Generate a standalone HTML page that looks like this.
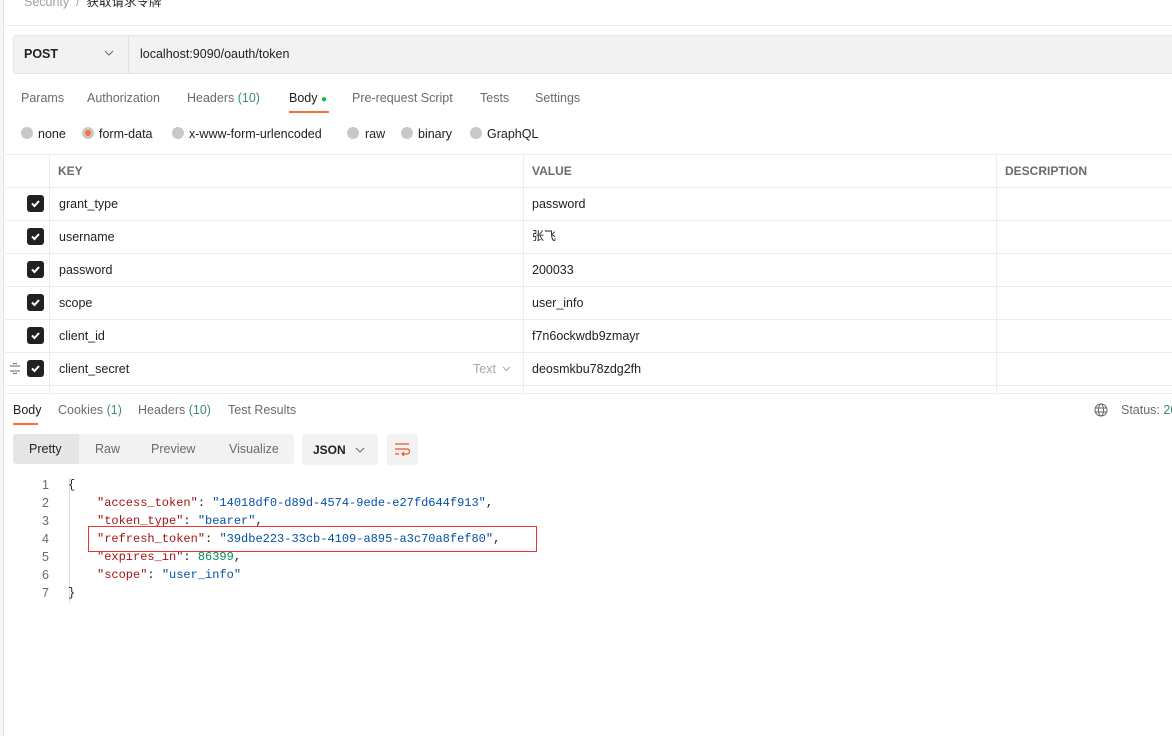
<!DOCTYPE html>
<html><head><meta charset="utf-8"><style>
*{margin:0;padding:0;box-sizing:border-box}
body{width:1172px;height:736px;overflow:hidden;background:#fff;font-family:"Liberation Sans","Noto Sans CJK SC",sans-serif;font-size:12.5px;line-height:15px;color:#212121;position:relative}
.a{position:absolute;white-space:nowrap}
.g{color:#6b6b6b}
.hl{position:absolute;height:1px;background:#ededed}
.vl{position:absolute;width:1px;background:#ededed}
.cb{position:absolute;left:27px;width:17px;height:17px;background:#212121;border-radius:3px}
.cb svg{position:absolute;left:2px;top:2px}
.rd{position:absolute;top:127px;width:12px;height:12px;border-radius:50%;background:#c8c8c8}
.code{font-family:"Liberation Mono",monospace;font-size:12px}
.k{color:#a31515}.s{color:#0451a5}.n{color:#098658}
.gr{color:#3a8f6a}
</style></head><body>
<div class="a" style="left:0;top:0;width:4px;height:736px;background:#f7f7f7;border-right:1px solid #e6e6e6"></div>
<div class="a g" style="left:24px;top:-5px;color:#a0a0a0">Security &nbsp;/ &nbsp;<span style="color:#212121">获取请求令牌</span></div>
<div class="hl" style="left:5px;top:25px;width:1167px"></div>
<div class="a" style="left:13px;top:35px;width:1165px;height:39px;background:#f2f2f2;border:1px solid #e6e6e6;border-radius:3px"></div>
<div class="vl" style="left:128px;top:35px;height:39px;background:#e0e0e0"></div>
<div class="a" style="left:24px;top:47px;font-weight:bold">POST</div>
<svg class="a" style="left:104px;top:50px" width="10" height="6"><path d="M1 1l4 4 4-4" stroke="#666" fill="none"/></svg>
<div class="a" style="left:140px;top:47px">localhost:9090/oauth/token</div>
<div class="a g" style="left:21px;top:91px">Params</div>
<div class="a g" style="left:87px;top:91px">Authorization</div>
<div class="a g" style="left:187px;top:91px">Headers <span class="gr">(10)</span></div>
<div class="a" style="left:289px;top:91px">Body <span style="color:#0cbb52;font-size:10px">●</span></div>
<div class="a" style="left:289px;top:111px;width:40px;height:2px;background:#ff6c37"></div>
<div class="a g" style="left:352px;top:91px">Pre-request Script</div>
<div class="a g" style="left:480px;top:91px">Tests</div>
<div class="a g" style="left:535px;top:91px">Settings</div>
<div class="rd" style="left:21px"></div><div class="a" style="left:38px;top:127px">none</div>
<div class="rd" style="left:82px"></div><div class="a" style="left:85px;top:130px;width:6px;height:6px;border-radius:50%;background:#ff6c37"></div><div class="a" style="left:99px;top:127px">form-data</div>
<div class="rd" style="left:172px"></div><div class="a" style="left:189px;top:127px">x-www-form-urlencoded</div>
<div class="rd" style="left:347px"></div><div class="a" style="left:365px;top:127px">raw</div>
<div class="rd" style="left:401px"></div><div class="a" style="left:418px;top:127px">binary</div>
<div class="rd" style="left:470px"></div><div class="a" style="left:487px;top:127px">GraphQL</div>
<div class="hl" style="left:5px;top:154px;width:1167px"></div>
<div class="hl" style="left:5px;top:187px;width:1167px"></div>
<div class="hl" style="left:5px;top:220px;width:1167px"></div>
<div class="hl" style="left:5px;top:253px;width:1167px"></div>
<div class="hl" style="left:5px;top:286px;width:1167px"></div>
<div class="hl" style="left:5px;top:319px;width:1167px"></div>
<div class="hl" style="left:5px;top:352px;width:1167px"></div>
<div class="hl" style="left:5px;top:385px;width:1167px"></div>
<div class="hl" style="left:5px;top:393px;width:1167px"></div>
<div class="vl" style="left:49px;top:154px;height:239px"></div>
<div class="vl" style="left:523px;top:154px;height:239px"></div>
<div class="vl" style="left:996px;top:154px;height:239px"></div>
<div class="a g" style="left:58px;top:164px;font-weight:bold;font-size:12px">KEY</div>
<div class="a g" style="left:532px;top:164px;font-weight:bold;font-size:12px">VALUE</div>
<div class="a g" style="left:1005px;top:164px;font-weight:bold;font-size:12px">DESCRIPTION</div>
<div class="cb" style="top:195px"><svg width="13" height="13"><path d="M3 6.5l2.5 2.5 4.5-5" stroke="#fff" stroke-width="2" fill="none"/></svg></div>
<div class="cb" style="top:228px"><svg width="13" height="13"><path d="M3 6.5l2.5 2.5 4.5-5" stroke="#fff" stroke-width="2" fill="none"/></svg></div>
<div class="cb" style="top:261px"><svg width="13" height="13"><path d="M3 6.5l2.5 2.5 4.5-5" stroke="#fff" stroke-width="2" fill="none"/></svg></div>
<div class="cb" style="top:294px"><svg width="13" height="13"><path d="M3 6.5l2.5 2.5 4.5-5" stroke="#fff" stroke-width="2" fill="none"/></svg></div>
<div class="cb" style="top:327px"><svg width="13" height="13"><path d="M3 6.5l2.5 2.5 4.5-5" stroke="#fff" stroke-width="2" fill="none"/></svg></div>
<div class="cb" style="top:360px"><svg width="13" height="13"><path d="M3 6.5l2.5 2.5 4.5-5" stroke="#fff" stroke-width="2" fill="none"/></svg></div>
<svg class="a" style="left:9px;top:363px" width="12" height="11"><path d="M1 3h10M1 8h10M4 1l2-1 2 1M4 10l2 1 2-1" stroke="#666" fill="none"/></svg>
<div class="a" style="left:59px;top:197px">grant_type</div><div class="a" style="left:532px;top:197px">password</div>
<div class="a" style="left:59px;top:230px">username</div><div class="a" style="left:532px;top:229px;font-size:12px">张飞</div>
<div class="a" style="left:59px;top:263px">password</div><div class="a" style="left:532px;top:263px">200033</div>
<div class="a" style="left:59px;top:296px">scope</div><div class="a" style="left:532px;top:296px">user_info</div>
<div class="a" style="left:59px;top:329px">client_id</div><div class="a" style="left:532px;top:329px">f7n6ockwdb9zmayr</div>
<div class="a" style="left:59px;top:362px">client_secret</div><div class="a" style="left:473px;top:362px;color:#a6a6a6">Text</div>
<svg class="a" style="left:502px;top:366px" width="9" height="6"><path d="M1 1l3.5 3.5L8 1" stroke="#a6a6a6" fill="none"/></svg>
<div class="a" style="left:532px;top:362px">deosmkbu78zdg2fh</div>
<div class="a" style="left:13px;top:403px">Body</div>
<div class="a" style="left:13px;top:423px;width:25px;height:2px;background:#ff6c37"></div>
<div class="a g" style="left:58px;top:403px">Cookies <span class="gr">(1)</span></div>
<div class="a g" style="left:138px;top:403px">Headers <span class="gr">(10)</span></div>
<div class="a g" style="left:228px;top:403px">Test Results</div>
<svg class="a" style="left:1094px;top:403px" width="14" height="14"><circle cx="7" cy="7" r="6" stroke="#666" fill="none"/><ellipse cx="7" cy="7" rx="2.5" ry="6" stroke="#666" fill="none"/><path d="M1 5h12M1 9h12" stroke="#666"/></svg>
<div class="a g" style="left:1121px;top:403px">Status: <span class="gr">20</span></div>
<div class="a" style="left:13px;top:434px;width:281px;height:30px;background:#f2f2f2;border-radius:3px"></div>
<div class="a" style="left:13px;top:434px;width:66px;height:30px;background:#e6e6e6;border-radius:3px 0 0 3px"></div>
<div class="a" style="left:29px;top:442px">Pretty</div>
<div class="a g" style="left:95px;top:442px">Raw</div>
<div class="a g" style="left:151px;top:442px">Preview</div>
<div class="a g" style="left:229px;top:442px">Visualize</div>
<div class="a" style="left:302px;top:434px;width:76px;height:31px;background:#f2f2f2;border-radius:3px"></div>
<div class="a" style="left:313px;top:443px;font-weight:bold;font-size:12px">JSON</div>
<svg class="a" style="left:355px;top:447px" width="10" height="6"><path d="M1 1l4 4 4-4" stroke="#666" fill="none"/></svg>
<div class="a" style="left:387px;top:434px;width:31px;height:31px;background:#f2f2f2;border-radius:3px"></div>
<svg class="a" style="left:394px;top:442px" width="17" height="15"><path d="M1 2h14M1 7h12a2.5 2.5 0 0 1 0 5H8M10 10l-2 2 2 2M1 12h4" stroke="#e8572a" stroke-width="1.2" fill="none"/></svg>
<div class="vl" style="left:69px;top:478px;height:125px;background:#ddd"></div>
<div class="code">
<div class="a g" style="left:42px;top:478px;font-family:'Liberation Sans',sans-serif;font-size:12.5px">1</div><div class="a" style="left:68px;top:478px">{</div>
<div class="a g" style="left:42px;top:496px;font-family:'Liberation Sans',sans-serif;font-size:12.5px">2</div><div class="a" style="left:97px;top:496px"><span class="k">"access_token"</span>: <span class="s">"14018df0-d89d-4574-9ede-e27fd644f913"</span>,</div>
<div class="a g" style="left:42px;top:514px;font-family:'Liberation Sans',sans-serif;font-size:12.5px">3</div><div class="a" style="left:97px;top:514px"><span class="k">"token_type"</span>: <span class="s">"bearer"</span>,</div>
<div class="a g" style="left:42px;top:532px;font-family:'Liberation Sans',sans-serif;font-size:12.5px">4</div><div class="a" style="left:97px;top:532px"><span class="k">"refresh_token"</span>: <span class="s">"39dbe223-33cb-4109-a895-a3c70a8fef80"</span>,</div>
<div class="a g" style="left:42px;top:550px;font-family:'Liberation Sans',sans-serif;font-size:12.5px">5</div><div class="a" style="left:97px;top:550px"><span class="k">"expires_in"</span>: <span class="n">86399</span>,</div>
<div class="a g" style="left:42px;top:568px;font-family:'Liberation Sans',sans-serif;font-size:12.5px">6</div><div class="a" style="left:97px;top:568px"><span class="k">"scope"</span>: <span class="s">"user_info"</span></div>
<div class="a g" style="left:42px;top:586px;font-family:'Liberation Sans',sans-serif;font-size:12.5px">7</div><div class="a" style="left:68px;top:586px">}</div>
</div>
<div class="a" style="left:88px;top:526px;width:449px;height:26px;border:1px solid #e53935"></div>
</body></html>
